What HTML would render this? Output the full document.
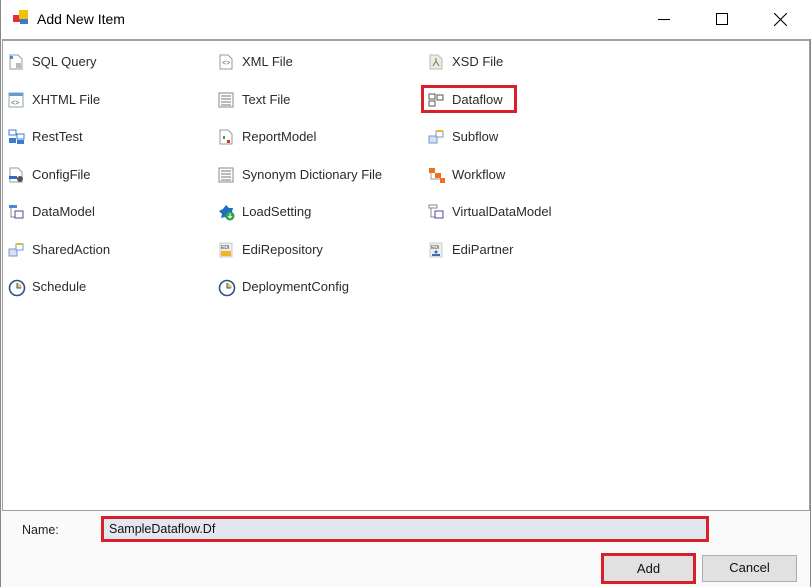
<!DOCTYPE html>
<html><head><meta charset="utf-8"><style>
*{margin:0;padding:0;box-sizing:border-box}
body{width:811px;height:587px;background:#fafafa;font-family:"Liberation Sans",sans-serif;position:relative;overflow:hidden}
.win{position:absolute;left:0;top:0;width:811px;height:587px;background:#fafafa;border-right:1px solid #888;border-left:1px solid #888}
.title{position:absolute;left:0;top:0;width:810px;height:39px;background:#fff}
.title .t{position:absolute;left:36px;top:11px;font-size:14px;color:#000}
.list{position:absolute;left:1px;top:39px;width:808px;height:472px;background:#fff;border:1px solid #a0a0a0;border-top:2px solid #a0a0a0}
.it{position:absolute;font-size:13px;color:#2b2b2b;height:20px;line-height:20px}
.it svg{position:absolute;left:-24px;top:2px}
.sel{position:absolute;border:3px solid #d9202a}
.lbl{position:absolute;left:21px;top:523px;font-size:12.5px;color:#222}
.inp{position:absolute;left:100px;top:516px;width:608px;height:26px;border:3px solid #d9202a;background:#e2e8ef;font-size:12.5px;line-height:20px;padding-left:5px;color:#111}
.btn{position:absolute;height:28px;font-size:13px;text-align:center;line-height:24px;color:#111;background:#e1e1e1;border:1px solid #adadad}
</style></head><body>
<div class="win">
<div class="title">
<svg style="position:absolute;left:12px;top:10px" width="17" height="16"><rect x="0" y="5" width="7" height="7" fill="#d33"/><rect x="6" y="0" width="9" height="9" fill="#f2c200"/><rect x="7" y="9" width="8" height="5" fill="#3a78d4"/></svg>
<span class="t">Add New Item</span>
<div style="position:absolute;left:657px;top:19px;width:12px;height:1px;background:#000"></div>
<div style="position:absolute;left:715px;top:13px;width:12px;height:12px;border:1px solid #000"></div>
<svg style="position:absolute;left:773px;top:13px" width="13" height="13"><path d="M0 0L13 13M13 0L0 13" stroke="#000" stroke-width="1.1"/></svg>
</div>
<div class="list">
<div class="it" style="left:29px;top:11px"><svg width="16" height="16"><path d="M2 1h8l4 4v10H2z" fill="#fff" stroke="#999"/><rect x="2" y="2" width="3" height="3" fill="#4a8ad4"/><rect x="8" y="9" width="5" height="5" fill="#bbb"/></svg>SQL Query</div>
<div class="it" style="left:29px;top:49px"><svg width="16" height="16"><rect x="1" y="1" width="14" height="14" fill="#fff" stroke="#8aa"/><rect x="1" y="1" width="14" height="3" fill="#6b9bd6"/><text x="3" y="13" font-size="7" fill="#555">&lt;&gt;</text></svg>XHTML File</div>
<div class="it" style="left:29px;top:86px"><svg width="18" height="16"><rect x="1" y="1" width="7" height="5" fill="#fff" stroke="#3a7bd5"/><rect x="9" y="5" width="7" height="5" fill="#fff" stroke="#3a7bd5"/><rect x="1" y="9" width="7" height="5" fill="#3a7bd5"/><rect x="9" y="11" width="7" height="4" fill="#3a7bd5"/></svg>RestTest</div>
<div class="it" style="left:29px;top:124px"><svg width="16" height="16"><path d="M2 1h8l4 4v10H2z" fill="#fff" stroke="#999"/><rect x="1" y="9" width="8" height="3" fill="#2c6fc4"/><circle cx="12" cy="12" r="3" fill="#555"/></svg>ConfigFile</div>
<div class="it" style="left:29px;top:161px"><svg width="16" height="16"><rect x="1" y="1" width="8" height="3" fill="#4a8ad4"/><path d="M3 4v9h4" stroke="#888" fill="none"/><rect x="7" y="7" width="8" height="7" fill="#fff" stroke="#4a4a9a"/></svg>DataModel</div>
<div class="it" style="left:29px;top:199px"><svg width="16" height="16"><rect x="1" y="7" width="8" height="7" fill="#dde" stroke="#6a9bd6"/><rect x="8" y="2" width="7" height="6" fill="#fff" stroke="#6a9bd6"/><rect x="9" y="1" width="5" height="2" fill="#f2b400"/></svg>SharedAction</div>
<div class="it" style="left:29px;top:236px"><svg width="18" height="18"><circle cx="9" cy="9" r="7.5" fill="#fff" stroke="#30508a" stroke-width="1.6"/><path d="M9 4v5h5A5 5 0 0 0 9 4z" fill="#e8c860"/><path d="M9 4v5h4" stroke="#30508a" fill="none"/></svg>Schedule</div>
<div class="it" style="left:239px;top:11px"><svg width="16" height="16"><path d="M2 1h8l4 4v10H2z" fill="#fff" stroke="#999"/><text x="4" y="11" font-size="7" fill="#666">&lt;&gt;</text></svg>XML File</div>
<div class="it" style="left:239px;top:49px"><svg width="16" height="16"><rect x="1" y="1" width="14" height="14" fill="#fff" stroke="#888"/><path d="M3 4h10M3 7h10M3 10h10M3 13h10" stroke="#777"/></svg>Text File</div>
<div class="it" style="left:239px;top:86px"><svg width="16" height="16"><path d="M2 1h8l4 4v10H2z" fill="#fff" stroke="#999"/><rect x="5" y="7" width="2" height="3" fill="#3a3"/><rect x="9" y="11" width="3" height="3" fill="#d33"/></svg>ReportModel</div>
<div class="it" style="left:239px;top:124px"><svg width="16" height="16"><rect x="1" y="1" width="14" height="14" fill="#fff" stroke="#888"/><path d="M3 4h10M3 7h10M3 10h10M3 13h10" stroke="#777"/></svg>Synonym Dictionary File</div>
<div class="it" style="left:239px;top:161px"><svg width="18" height="18"><path d="M8 1l3 3 4 0-1 4 2 3-4 1-2 4-3-3-4 1 1-4-3-3 4-2z" fill="#1f6cc4"/><circle cx="12" cy="12" r="4.5" fill="#2aa345"/><path d="M12 9v5M10 12l2 2 2-2" stroke="#fff" fill="none"/></svg>LoadSetting</div>
<div class="it" style="left:239px;top:199px"><svg width="16" height="16"><rect x="2" y="1" width="12" height="14" fill="#eee" stroke="#ccc"/><text x="3" y="7" font-size="5" fill="#333">EDI</text><rect x="3" y="9" width="10" height="5" fill="#f0b429"/></svg>EdiRepository</div>
<div class="it" style="left:239px;top:236px"><svg width="18" height="18"><circle cx="9" cy="9" r="7.5" fill="#fff" stroke="#30508a" stroke-width="1.6"/><path d="M9 4v5h5A5 5 0 0 0 9 4z" fill="#e8c860"/><path d="M9 4v5h4" stroke="#30508a" fill="none"/></svg>DeploymentConfig</div>
<div class="it" style="left:449px;top:11px"><svg width="16" height="16"><path d="M2 1h8l4 4v10H2z" fill="#eeeadd" stroke="#bbb"/><path d="M5 12l3-5 3 5M8 7V4" stroke="#776" fill="none"/></svg>XSD File</div>
<div class="it" style="left:449px;top:49px"><svg width="16" height="16"><rect x="1" y="2" width="6" height="5" fill="#fff" stroke="#555"/><rect x="9" y="3" width="6" height="5" fill="#fff" stroke="#555"/><rect x="1" y="9" width="6" height="5" fill="#fff" stroke="#555"/></svg>Dataflow</div>
<div class="it" style="left:449px;top:86px"><svg width="16" height="16"><rect x="1" y="7" width="8" height="7" fill="#dde" stroke="#6a9bd6"/><rect x="8" y="2" width="7" height="6" fill="#fff" stroke="#6a9bd6"/><rect x="9" y="1" width="5" height="2" fill="#f2b400"/></svg>Subflow</div>
<div class="it" style="left:449px;top:124px"><svg width="18" height="16"><rect x="1" y="1" width="6" height="5" fill="#f07020"/><rect x="7" y="6" width="6" height="5" fill="#f07020"/><rect x="12" y="11" width="5" height="5" fill="#f07020"/><path d="M3 6v6h9" stroke="#999" fill="none"/></svg>Workflow</div>
<div class="it" style="left:449px;top:161px"><svg width="16" height="16"><rect x="1" y="1" width="8" height="3" fill="#fff" stroke="#888"/><path d="M3 4v9h4" stroke="#888" fill="none"/><rect x="7" y="7" width="8" height="7" fill="#fff" stroke="#4a4a9a"/></svg>VirtualDataModel</div>
<div class="it" style="left:449px;top:199px"><svg width="16" height="16"><rect x="2" y="1" width="12" height="14" fill="#eee" stroke="#ccc"/><text x="3" y="7" font-size="5" fill="#333">EDI</text><circle cx="8" cy="10" r="1.5" fill="#3a6ab8"/><rect x="4" y="12" width="8" height="2" fill="#3a6ab8"/></svg>EdiPartner</div>
</div>
<div class="sel" style="left:420px;top:85px;width:96px;height:28px"></div>
<div class="lbl">Name:</div>
<div class="inp">SampleDataflow.Df</div>
<div class="btn" style="left:600px;top:553px;width:95px;height:31px;border:3px solid #d9202a;line-height:25px">Add</div>
<div class="btn" style="left:701px;top:555px;width:95px;height:27px">Cancel</div>
</div>
</body></html>
